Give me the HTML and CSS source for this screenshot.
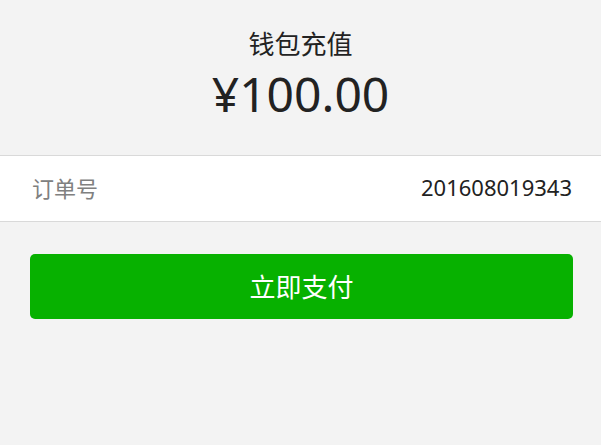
FILE: index.html
```html
<!DOCTYPE html>
<html lang="zh-CN">
<head>
  <meta charset="UTF-8">
  <title>钱包充值</title>
  <meta name="viewport" content="width=device-width, initial-scale=1.0">
  <link rel="stylesheet" href="styles.css">
</head>
<body>
  <div class="page">
    <!-- 金额 -->
    <div class="header">
      <div class="title">钱包充值</div>
      <div class="amount">¥100.00</div>
    </div>

    <!-- 订单信息 -->
    <div class="order-row">
      <span class="label">订单号</span>
      <span class="value">201608019343</span>
    </div>

    <div class="actions">
      <button class="pay-btn">立即支付</button>
    </div>
  </div>
</body>
</html>
```

FILE: styles.css
```css
* { box-sizing: border-box; }

html, body {
  margin: 0;
  padding: 0;
  background: #f3f3f3;
}

body {
  font-family: "Noto Sans", "Noto Sans CJK SC", sans-serif;
  color: #222;
}

.page {
  width: 100%;
  min-height: 445px;
}

.header {
  text-align: center;
  padding-top: 27px;
  height: 155px;
}

.title {
  font-size: 26px;
  line-height: 34px;
}

.amount {
  font-size: 48px;
  line-height: 64px;
  margin-top: 1px;
}

.order-row {
  display: flex;
  justify-content: space-between;
  align-items: center;
  height: 67px;
  padding: 0 29px 4px 32px;
  background: #fff;
  border-top: 1px solid #d9d9d9;
  border-bottom: 1px solid #d9d9d9;
}

.label {
  font-size: 22px;
  color: #808080;
}

.value {
  font-size: 22px;
  color: #222;
}

.actions {
  padding: 32px 28px 0 30px;
}

.pay-btn {
  display: block;
  width: 100%;
  height: 65px;
  padding: 0 0 2px;
  border: none;
  border-radius: 5px;
  background: #07b100;
  color: #fff;
  font-family: inherit;
  font-size: 26px;
  cursor: pointer;
}
```
